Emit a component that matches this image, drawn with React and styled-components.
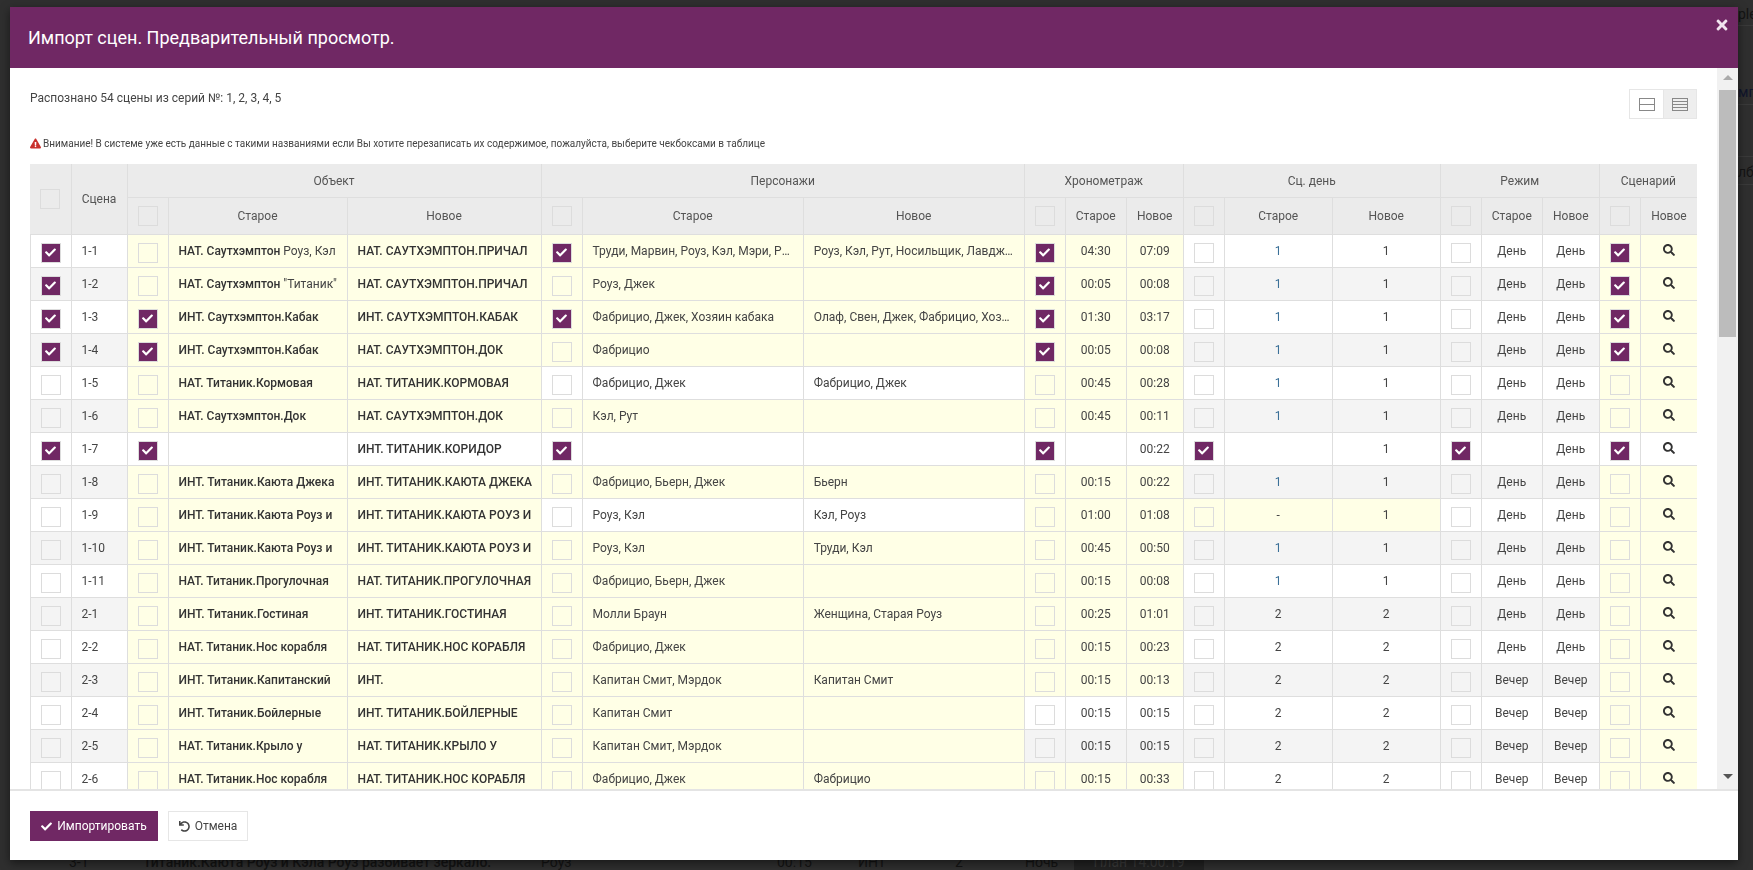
import React from 'react';
import styled, { createGlobalStyle } from 'styled-components';
import { FaCheck, FaTimes, FaSearch, FaUndo, FaExclamationTriangle } from 'react-icons/fa';

const PURPLE = '#702864';
const YELLOW = '#ffffe6';
const LINE = '#dedede';

const Global = createGlobalStyle`
  html, body { margin: 0; height: 100%; overflow: hidden; }
  body { font-family: Roboto, "Liberation Sans", sans-serif; font-size: 12px; color: #444; background: #2f2f2f; }
  * { box-sizing: border-box; }
`;

const Page = styled.div`
  height: 870px;
  display: flex;
  flex-direction: column;
  justify-content: space-between;
  overflow: hidden;
  background: #2f2f2f;
`;
const Peek = styled.div`
  align-self: flex-end;
  width: 15px;
  overflow: hidden;
  padding-top: 6px;
  font-size: 14px;
  white-space: nowrap;
`;
const PeekLine = styled.div`
  height: ${p => p.$h}px;
  padding-top: ${p => p.$pad || 0}px;
  line-height: 16px;
  border-bottom: 1px solid #3a3a3a;
  color: ${p => p.$c || '#141414'};
`;
const BackRow = styled.div`
  display: grid;
  grid-template-columns: 74px 398px 236px 81px 97px 70px 49px 130px;
  padding-left: 69px;
  height: 14px;
  line-height: 12px;
  font-size: 14px;
  color: #141414;
  overflow: hidden;
`;
const BackCell = styled.div`
  font-weight: ${p => (p.$b ? 500 : 400)};
  white-space: nowrap;
  ${p => p.$dark && 'background:#222; color:#3a3a3a; text-align:center; height:14px;'}
`;

const Overlay = styled.div`
  position: fixed;
  inset: 0;
  padding: 7px 15px 10px 10px;
`;
const Modal = styled.section`
  height: 853px;
  display: flex;
  flex-direction: column;
  background: #fff;
  box-shadow: 0 3px 9px rgba(0, 0, 0, 0.5);
`;
const Header = styled.header`
  position: relative;
  height: 61px;
  flex: none;
  display: flex;
  align-items: center;
  padding: 1px 18px 0;
  background: ${PURPLE};
  color: #fff;
`;
const Title = styled.h4`
  margin: 0;
  font-size: 18px;
  font-weight: 400;
  line-height: 20px;
`;
const Close = styled.button`
  position: absolute;
  top: 10px;
  right: 8px;
  padding: 0;
  border: 0;
  background: none;
  color: #f1e4ef;
  font-size: 16px;
  line-height: 16px;
  display: flex;
`;
const Body = styled.div`
  flex: 1;
  min-height: 0;
  display: flex;
`;
const Content = styled.div`
  flex: 1;
  min-width: 0;
  overflow: hidden;
  padding: 21px 20px 0;
`;
const Toolbar = styled.div`
  display: flex;
  justify-content: space-between;
  align-items: center;
  height: 30px;
`;
const Summary = styled.p`
  margin: 0 0 12px;
  font-size: 12px;
  color: #444;
  line-height: 16px;
`;
const ViewGroup = styled.div`
  display: flex;
  border: 1px solid #e6e6e6;
`;
const ViewBtn = styled.div`
  width: 33px;
  height: 28px;
  display: flex;
  align-items: center;
  justify-content: center;
  background: ${p => (p.$active ? '#eee' : '#fff')};
  & + & { border-left: 1px solid #e6e6e6; }
`;
const Warning = styled.p`
  margin: 17px 0 13px;
  height: 15px;
  display: flex;
  align-items: center;
  gap: 2px;
  font-size: 10px;
  line-height: 12px;
  color: #444;
  svg { color: #c9302c; font-size: 11px; }
`;
const Table = styled.table`
  table-layout: fixed;
  width: 1667px;
  border-collapse: separate;
  border-spacing: 0;
`;
const Th = styled.th`
  height: ${p => p.$h}px;
  padding: 0;
  background: #ebebeb;
  font-size: 12px;
  font-weight: 400;
  color: #555;
  text-align: center;
  border-right: 1px solid ${LINE};
  border-bottom: 1px solid ${LINE};
  &:last-child { border-right: 0; }
`;
const Row = styled.tr`
  background: ${p => (p.$even ? '#f4f4f4' : '#fff')};
`;
const Td = styled.td`
  height: 33px;
  padding: 0 ${p => (p.$tight ? 0 : 10)}px 0 10px;
  background: ${p => (p.$y ? YELLOW : 'transparent')};
  border-right: 1px solid ${LINE};
  border-bottom: 1px solid ${LINE};
  border-left: ${p => (p.$first ? `1px solid ${LINE}` : '0')};
  text-align: ${p => p.$align || 'left'};
  color: ${p => p.$color || (p.$b ? '#333' : '#444')};
  font-weight: ${p => (p.$b ? 500 : 400)};
  font-size: 12px;
  line-height: 16px;
  white-space: nowrap;
  overflow: hidden;
  text-overflow: ${p => (p.$tight ? 'clip' : 'ellipsis')};
  vertical-align: middle;
  &:last-child { border-right: 0; }
`;
const BoxCell = styled(Td)`
  padding: 3px 0 0;
  text-align: center;
`;
const Box = styled.span`
  display: inline-flex;
  align-items: center;
  justify-content: center;
  width: 20px;
  height: 20px;
  vertical-align: middle;
  border: 1px solid #dcdcdc;
  background: ${p => (p.$on ? PURPLE : 'transparent')};
  color: #fff;
  font-size: 11px;
`;
const Regular = styled.span`
  font-weight: 400;
  color: #444;
`;
const Lens = styled.span`
  display: inline-flex;
  font-size: 12px;
  color: #333;
  position: relative;
  top: 1px;
`;
const Scrollbar = styled.div`
  width: 21px;
  flex: none;
  display: flex;
  flex-direction: column;
  background: #f1f1f1;
`;
const ArrowUp = styled.div`
  height: 22px;
  flex: none;
  display: flex;
  align-items: center;
  justify-content: center;
  &::before {
    content: '';
    border: 5px solid transparent;
    border-top: 0;
    border-bottom: 5px solid #aaa;
    margin-top: -4px;
  }
`;
const Thumb = styled.div`
  height: 247px;
  margin: 0 2px 0;
  background: #bcbcbc;
`;
const Rest = styled.div`
  flex: 1;
`;
const ArrowDown = styled.div`
  height: 21px;
  flex: none;
  display: flex;
  align-items: center;
  justify-content: center;
  &::before {
    content: '';
    border: 5px solid transparent;
    border-bottom: 0;
    border-top: 5px solid #555;
    margin-top: -5px;
  }
`;
const Footer = styled.footer`
  flex: none;
  height: 71px;
  display: flex;
  gap: 10px;
  padding: 20px 20px;
  border-top: 2px solid #e4e4e4;
`;
const Button = styled.button`
  height: 30px;
  width: ${p => p.$w}px;
  padding: 0;
  display: flex;
  align-items: center;
  justify-content: center;
  gap: 5px;
  font: 400 12px Roboto, "Liberation Sans", sans-serif;
  background: ${p => (p.$primary ? PURPLE : '#fff')};
  color: ${p => (p.$primary ? '#fff' : '#444')};
  border: ${p => (p.$primary ? '0' : '1px solid #e6e6e6')};
  svg { font-size: 11px; }
`;

const cols = [41.5, 56, 41, 179, 194, 41, 221, 221, 41, 61, 57, 41, 108, 108, 41, 61, 57, 41, 56];

const O = (n, t, o, on, c, cn, a, b, d, dn, m, mn, ch = [], rest = '') => ({ n, t, o, on, c, cn, a, b, d, dn, m, mn, ch, rest });
const KA = 'ИНТ. Титаник.Каюта Роуз и';
const KB = 'ИНТ. ТИТАНИК.КАЮТА РОУЗ И';
const D = 'День';
const V = 'Вечер';

const rows = [
  O('1-1', 1, 'НАТ. Саутхэмптон', 'НАТ. САУТХЭМПТОН.ПРИЧАЛ', 'Труди, Марвин, Роуз, Кэл, Мэри, Рут, Лавджой', 'Роуз, Кэл, Рут, Носильщик, Лавджой, Фабрицио', '04:30', '07:09', '1', '1', D, D, ['all', 'c', 't', 's'], ' Роуз, Кэл'),
  O('1-2', 1, 'НАТ. Саутхэмптон', 'НАТ. САУТХЭМПТОН.ПРИЧАЛ', 'Роуз, Джек', '', '00:05', '00:08', '1', '1', D, D, ['all', 't', 's'], ' "Титаник"'),
  O('1-3', 1, 'ИНТ. Саутхэмптон.Кабак', 'ИНТ. САУТХЭМПТОН.КАБАК', 'Фабрицио, Джек, Хозяин кабака', 'Олаф, Свен, Джек, Фабрицио, Хозяин кабака', '01:30', '03:17', '1', '1', D, D, ['all', 'o', 'c', 't', 's']),
  O('1-4', 1, 'ИНТ. Саутхэмптон.Кабак', 'НАТ. САУТХЭМПТОН.ДОК', 'Фабрицио', '', '00:05', '00:08', '1', '1', D, D, ['all', 'o', 't', 's']),
  O('1-5', 1, 'НАТ. Титаник.Кормовая', 'НАТ. ТИТАНИК.КОРМОВАЯ', 'Фабрицио, Джек', 'Фабрицио, Джек', '00:45', '00:28', '1', '1', D, D),
  O('1-6', 1, 'НАТ. Саутхэмптон.Док', 'НАТ. САУТХЭМПТОН.ДОК', 'Кэл, Рут', '', '00:45', '00:11', '1', '1', D, D),
  O('1-7', 0, '', 'ИНТ. ТИТАНИК.КОРИДОР', '', '', '', '00:22', '', '1', '', D, ['all', 'o', 'c', 't', 'd', 'm', 's']),
  O('1-8', 1, 'ИНТ. Титаник.Каюта Джека', 'ИНТ. ТИТАНИК.КАЮТА ДЖЕКА', 'Фабрицио, Бьерн, Джек', 'Бьерн', '00:15', '00:22', '1', '1', D, D),
  O('1-9', 1, KA, KB, 'Роуз, Кэл', 'Кэл, Роуз', '01:00', '01:08', '-', '1', D, D),
  O('1-10', 1, KA, KB, 'Роуз, Кэл', 'Труди, Кэл', '00:45', '00:50', '1', '1', D, D),
  O('1-11', 1, 'НАТ. Титаник.Прогулочная', 'НАТ. ТИТАНИК.ПРОГУЛОЧНАЯ', 'Фабрицио, Бьерн, Джек', '', '00:15', '00:08', '1', '1', D, D),
  O('2-1', 1, 'ИНТ. Титаник.Гостиная', 'ИНТ. ТИТАНИК.ГОСТИНАЯ', 'Молли Браун', 'Женщина, Старая Роуз', '00:25', '01:01', '2', '2', D, D),
  O('2-2', 1, 'НАТ. Титаник.Нос корабля', 'НАТ. ТИТАНИК.НОС КОРАБЛЯ', 'Фабрицио, Джек', '', '00:15', '00:23', '2', '2', D, D),
  O('2-3', 1, 'ИНТ. Титаник.Капитанский', 'ИНТ.', 'Капитан Смит, Мэрдок', 'Капитан Смит', '00:15', '00:13', '2', '2', V, V),
  O('2-4', 1, 'ИНТ. Титаник.Бойлерные', 'ИНТ. ТИТАНИК.БОЙЛЕРНЫЕ', 'Капитан Смит', '', '00:15', '00:15', '2', '2', V, V),
  O('2-5', 1, 'НАТ. Титаник.Крыло у', 'НАТ. ТИТАНИК.КРЫЛО У', 'Капитан Смит, Мэрдок', '', '00:15', '00:15', '2', '2', V, V),
  O('2-6', 1, 'НАТ. Титаник.Нос корабля', 'НАТ. ТИТАНИК.НОС КОРАБЛЯ', 'Фабрицио, Джек', 'Фабрицио', '00:15', '00:33', '2', '2', V, V),
];

const Check = ({ on }) => <Box $on={on}>{on && <FaCheck />}</Box>;

const SplitIcon = () => (
  <svg width="16" height="13" viewBox="0 0 16 13" fill="none" stroke="#888">
    <rect x="0.5" y="0.5" width="15" height="12" />
    <path d="M0 6.5h16" />
  </svg>
);
const ListIcon = () => (
  <svg width="16" height="13" viewBox="0 0 16 13" fill="none" stroke="#888">
    <rect x="0.5" y="0.5" width="15" height="12" />
    <path d="M0 3.5h16M0 6.5h16M0 9.5h16" />
  </svg>
);

function SceneRow({ r, even }) {
  const has = k => r.ch.includes(k);
  const isNew = r.n === '1-7';
  const yO = !isNew;
  const yC = !isNew && r.c !== r.cn && !(r.n === '1-5' || r.n === '1-9');
  const yT = !isNew && r.a !== r.b;
  const yD = !isNew && r.d !== r.dn;
  const yS = !isNew;
  const dayColor = r.d === '1' ? '#3b7098' : '#444';
  return (
    <Row $even={even}>
      <BoxCell $first><Check on={has('all')} /></BoxCell>
      <Td>{r.n}</Td>
      <BoxCell $y={yO}><Check on={has('o')} /></BoxCell>
      <Td $y={yO} $b $tight>{r.o}{r.rest && <Regular>{r.rest}</Regular>}</Td>
      <Td $y={yO} $b $tight>{r.on}</Td>
      <BoxCell $y={yC}><Check on={has('c')} /></BoxCell>
      <Td $y={yC}>{r.c}</Td>
      <Td $y={yC}>{r.cn}</Td>
      <BoxCell $y={yT}><Check on={has('t')} /></BoxCell>
      <Td $y={yT} $align="center">{r.a}</Td>
      <Td $y={yT} $align="center">{r.b}</Td>
      <BoxCell $y={yD}><Check on={has('d')} /></BoxCell>
      <Td $y={yD} $align="center" $color={dayColor}>{r.d}</Td>
      <Td $y={yD} $align="center">{r.dn}</Td>
      <BoxCell><Check on={has('m')} /></BoxCell>
      <Td $align="center">{r.m}</Td>
      <Td $align="center">{r.mn}</Td>
      <BoxCell $y={yS}><Check on={has('s')} /></BoxCell>
      <Td $y={yS} $align="center"><Lens><FaSearch /></Lens></Td>
    </Row>
  );
}

export default function App() {
  return (
    <>
      <Global />
      <Page>
        <Peek>
          <PeekLine $h={20}>ple</PeekLine>
          <PeekLine $h={79} $pad={58} $c="#10152c">мпорт</PeekLine>
          <PeekLine $h={52} />
          <PeekLine $h={28} $pad={7}>лбцы</PeekLine>
        </Peek>
        <BackRow>
          <BackCell>3-1</BackCell>
          <BackCell $b>Титаник.Каюта Роуз и Кэла Роуз разбивает зеркало.</BackCell>
          <BackCell>Роуз</BackCell>
          <BackCell>00:15</BackCell>
          <BackCell>ИНТ</BackCell>
          <BackCell>2</BackCell>
          <BackCell>Ночь</BackCell>
          <BackCell $dark>План 14:00:19</BackCell>
        </BackRow>
      </Page>
      <Overlay>
        <Modal>
          <Header>
            <Title>Импорт сцен. Предварительный просмотр.</Title>
            <Close><FaTimes /></Close>
          </Header>
          <Body>
            <Content>
              <Toolbar>
                <Summary>Распознано 54 сцены из серий №: 1, 2, 3, 4, 5</Summary>
                <ViewGroup>
                  <ViewBtn><SplitIcon /></ViewBtn>
                  <ViewBtn $active><ListIcon /></ViewBtn>
                </ViewGroup>
              </Toolbar>
              <Warning>
                <FaExclamationTriangle />
                Внимание! В системе уже есть данные с такими названиями если Вы хотите перезаписать их содержимое, пожалуйста, выберите чекбоксами в таблице
              </Warning>
              <Table>
                <colgroup>
                  {cols.map((w, i) => <col key={i} style={{ width: w }} />)}
                </colgroup>
                <thead>
                  <tr>
                    <Th $h={34} rowSpan={2}><Check /></Th>
                    <Th rowSpan={2}>Сцена</Th>
                    <Th $h={34} colSpan={3}>Объект</Th>
                    <Th colSpan={3}>Персонажи</Th>
                    <Th colSpan={3}>Хронометраж</Th>
                    <Th colSpan={3}>Сц. день</Th>
                    <Th colSpan={3}>Режим</Th>
                    <Th colSpan={2}>Сценарий</Th>
                  </tr>
                  <tr>
                    <Th $h={37}><Check /></Th><Th>Старое</Th><Th>Новое</Th>
                    <Th><Check /></Th><Th>Старое</Th><Th>Новое</Th>
                    <Th><Check /></Th><Th>Старое</Th><Th>Новое</Th>
                    <Th><Check /></Th><Th>Старое</Th><Th>Новое</Th>
                    <Th><Check /></Th><Th>Старое</Th><Th>Новое</Th>
                    <Th><Check /></Th><Th>Новое</Th>
                  </tr>
                </thead>
                <tbody>
                  {rows.map((r, i) => <SceneRow key={r.n} r={r} even={i % 2 === 1} />)}
                </tbody>
              </Table>
            </Content>
            <Scrollbar>
              <ArrowUp />
              <Thumb />
              <Rest />
              <ArrowDown />
            </Scrollbar>
          </Body>
          <Footer>
            <Button $primary $w={128}><FaCheck /> Импортировать</Button>
            <Button $w={80}><FaUndo /> Отмена</Button>
          </Footer>
        </Modal>
      </Overlay>
    </>
  );
}
